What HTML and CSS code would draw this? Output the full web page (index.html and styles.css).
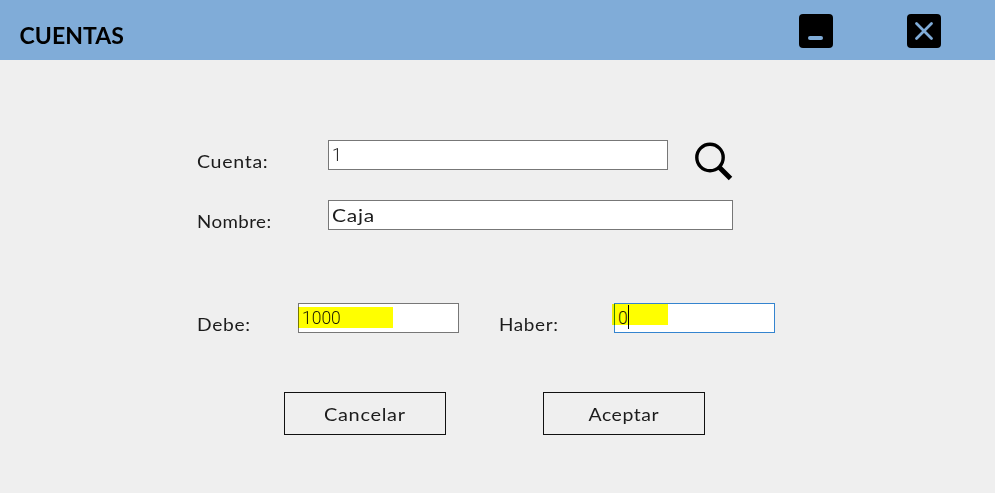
FILE: index.html
```html
<!DOCTYPE html>
<html lang="es">
<head>
<meta charset="utf-8">
<title>Cuentas</title>
<link rel="stylesheet" href="styles.css">
</head>
<body>
<header class="titlebar">
  <h1 class="title">CUENTAS</h1>
  <div class="window-controls">
    <svg class="control" viewBox="0 0 34 34"><rect width="34" height="34" rx="4"/><path d="M11 24H22" stroke-width="4"/></svg>
    <svg class="control" viewBox="0 0 34 34"><rect width="34" height="34" rx="4"/><path d="M9.5 9.5L24.5 24.5M24.5 9.5L9.5 24.5" stroke-width="2.8"/></svg>
  </div>
</header>
<main class="form">
  <div class="row">
    <span class="label"><span class="text t-cuenta">Cuenta:</span></span>
    <div class="field field-code number">1</div>
    <svg class="search" viewBox="0 0 40 40"><circle cx="16" cy="15.5" r="13.2" fill="none" stroke="#000" stroke-width="3.4"/><path d="M25 25L36.5 36.5" stroke="#000" stroke-width="5"/></svg>
  </div>
  <div class="row row-name">
    <span class="label"><span class="text t-nombre">Nombre:</span></span>
    <div class="field field-name"><span class="text t-caja">Caja</span></div>
  </div>
  <div class="row row-amounts">
    <span class="label label-debe"><span class="text t-debe">Debe:</span></span>
    <div class="field field-amount number">1000<i class="mark mark-debe"></i></div>
    <span class="label label-haber"><span class="text t-haber">Haber:</span></span>
    <div class="field field-amount focused number">0<i class="caret"></i><i class="mark mark-haber"></i></div>
  </div>
  <div class="actions">
    <button class="button"><span class="text t-cancelar">Cancelar</span></button>
    <button class="button"><span class="text t-aceptar">Aceptar</span></button>
  </div>
</main>
</body>
</html>
```
FILE: styles.css
```css
* { box-sizing: border-box; }
body {
  margin: 0;
  height: 493px;
  overflow: hidden;
  background: #efefef;
  color: #1c1c1c;
  font: 17.5px/24px "Century Gothic", Lato, sans-serif;
}
.titlebar {
  display: flex;
  justify-content: space-between;
  height: 60px;
  padding: 13.5px 54.5px 0 19.5px;
  background: #80acd8;
}
.title {
  margin: 7px 0 0;
  color: #000;
  font-size: 23px;
  line-height: 28px;
  font-weight: 700;
  letter-spacing: 0.05px;
}
.window-controls { display: flex; gap: 73.5px; }
.control { width: 34px; height: 34px; }
.control path { stroke: #80acd8; stroke-linecap: round; fill: none; }
.form { padding: 80px 0 0 197px; }
.row { display: flex; height: 30px; }
.row-name { margin-top: 30px; }
.row-amounts { margin-top: 73px; }
.label { width: 131px; padding-top: 10px; white-space: nowrap; }
.label-debe { width: 101px; }
.label-haber { width: 115px; margin-left: 40px; }
.field {
  position: relative;
  height: 30px;
  padding: 3px;
  border: 1px solid #777;
  background: #fff;
  white-space: nowrap;
}
.number { padding-top: 2px; font-family: Roboto, sans-serif; font-weight: 300; }
.field-code { width: 340px; }
.field-name { width: 405px; }
.field-amount { width: 161px; }
.focused { border-color: #3484cf; }
.search { width: 40px; height: 40px; margin: 2px 0 0 26px; }
.mark {
  position: absolute;
  height: 21px;
  background: #ff0;
  mix-blend-mode: multiply;
}
.mark-debe { left: -1px; top: 3px; width: 95px; }
.mark-haber { left: -3px; top: 0; width: 56px; }
.caret {
  position: absolute;
  left: 13px;
  top: 1px;
  width: 1px;
  height: 24px;
  background: #000;
}
.actions { display: flex; gap: 97px; margin: 59px 0 0 87px; }
.button {
  width: 162px;
  height: 43px;
  padding: 2px 0 0;
  border: 1px solid #111;
  background: transparent;
  color: inherit;
  font: inherit;
}
.text { display: inline-block; transform-origin: left; }
.button .text { transform-origin: center; }
.t-cuenta { letter-spacing: 0.6px; transform: scaleX(1.12); }
.t-nombre { letter-spacing: 0.4px; transform: scaleX(1.07); }
.t-debe { letter-spacing: 0.6px; transform: scaleX(1.1); }
.t-haber { letter-spacing: 0.6px; transform: scaleX(1.08); }
.t-caja { letter-spacing: 0.6px; transform: scaleX(1.2); }
.t-cancelar { letter-spacing: 0.6px; transform: scaleX(1.14); }
.t-aceptar { letter-spacing: 0.5px; transform: scaleX(1.11); }
```
